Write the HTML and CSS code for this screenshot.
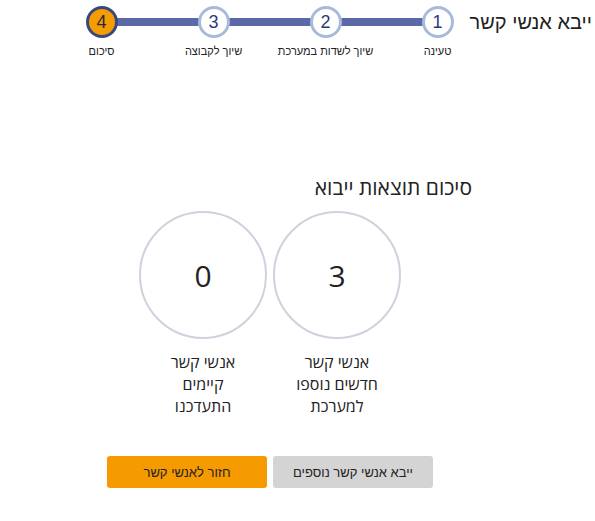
FILE: index.html
```html
<!DOCTYPE html>
<html lang="he" dir="rtl">

<head>
    <meta charset="UTF-8">
    <meta name="viewport" content="width=device-width, initial-scale=1.0">
    <title>ייבא אנשי קשר</title>
    <link rel="stylesheet" href="styles.css">
</head>

<body>
    <div class="header">
        <h1 class="title">ייבא אנשי קשר</h1>

        <div class="stepper">
            <div class="step done">
                <div class="step-circle">1</div>
                <div class="step-label">טעינה</div>
            </div>
            <div class="step done">
                <div class="step-circle">2</div>
                <div class="step-label">שיוך לשדות במערכת</div>
            </div>
            <div class="step done">
                <div class="step-circle">3</div>
                <div class="step-label">שיוך לקבוצה</div>
            </div>
            <div class="step active">
                <div class="step-circle">4</div>
                <div class="step-label">סיכום</div>
            </div>
        </div>
    </div>

    <div class="summary">
        <h2 class="summary-title">סיכום תוצאות ייבוא</h2>

        <div class="results">
            <div class="result">
                <div class="result-circle">3</div>
                <div class="result-label">אנשי קשר<br>חדשים נוספו<br>למערכת</div>
            </div>
            <div class="result">
                <div class="result-circle">0</div>
                <div class="result-label">אנשי קשר<br>קיימים<br>התעדכנו</div>
            </div>
        </div>

        <div class="actions">
            <button class="btn btn-grey">ייבא אנשי קשר נוספים</button>
            <button class="btn btn-orange">חזור לאנשי קשר</button>
        </div>
    </div>
</body>

</html>
```

FILE: styles.css
```css
body {
    font-family: 'Liberation Sans', 'DejaVu Sans', sans-serif;
    background-color: #ffffff;
    color: #222222;
    margin: 0;
    direction: rtl;
}

.header {
    display: flex;
    align-items: flex-start;
    padding: 6px 3px 0 0;
}

.title {
    margin: 0 0 0 12px;
    font-size: 20px;
    font-weight: normal;
    line-height: 32px;
    color: #222222;
    white-space: nowrap;
}

/* stepper */
.stepper {
    position: relative;
    display: flex;
    gap: 72px;
}

.stepper::before {
    content: '';
    position: absolute;
    top: 12px;
    right: 20px;
    left: 20px;
    height: 8px;
    background-color: #5b6aa7;
}

.step {
    position: relative;
    width: 40px;
    display: flex;
    flex-direction: column;
    align-items: center;
}

.step-circle {
    width: 26px;
    height: 26px;
    border: 3px solid #a9b9dc;
    border-radius: 50%;
    background-color: #ffffff;
    color: #2b3a7c;
    font-size: 18px;
    line-height: 26px;
    text-align: center;
}

.step.active .step-circle {
    border-color: #3a4880;
    background-color: #f59c00;
    color: #2b2b3a;
}

.step-label {
    margin-top: 6px;
    font-size: 11px;
    line-height: 14px;
    white-space: nowrap;
    color: #222222;
}

/* summary */
.summary {
    width: 404px;
    margin: 116px 0 0 0;
    padding-right: 123px;
}

.summary-title {
    margin: 0;
    font-family: 'Open Sans', 'DejaVu Sans', sans-serif;
    font-size: 21px;
    font-weight: normal;
    line-height: 26px;
    color: #222222;
}

.results {
    display: flex;
    justify-content: center;
    gap: 6px;
    margin-top: 11px;
}

.result {
    width: 128px;
    display: flex;
    flex-direction: column;
    align-items: center;
}

.result-circle {
    width: 124px;
    height: 124px;
    border: 2px solid #cfd1dd;
    border-radius: 50%;
    font-family: 'Open Sans', 'DejaVu Sans', sans-serif;
    font-size: 30px;
    line-height: 125px;
    text-align: center;
    color: #222222;
}

.result-label {
    margin-top: 12px;
    font-family: 'Open Sans', 'DejaVu Sans', sans-serif;
    font-size: 16px;
    line-height: 22px;
    text-align: center;
    color: #222222;
}

.actions {
    display: flex;
    justify-content: center;
    gap: 6px;
    margin-top: 39px;
}

.btn {
    width: 160px;
    height: 32px;
    border: none;
    border-radius: 3px;
    font-family: 'Liberation Sans', 'DejaVu Sans', sans-serif;
    font-size: 13px;
    color: #222222;
    cursor: pointer;
}

.btn-grey {
    background-color: #d4d4d4;
}

.btn-orange {
    background-color: #f59b00;
}
```
